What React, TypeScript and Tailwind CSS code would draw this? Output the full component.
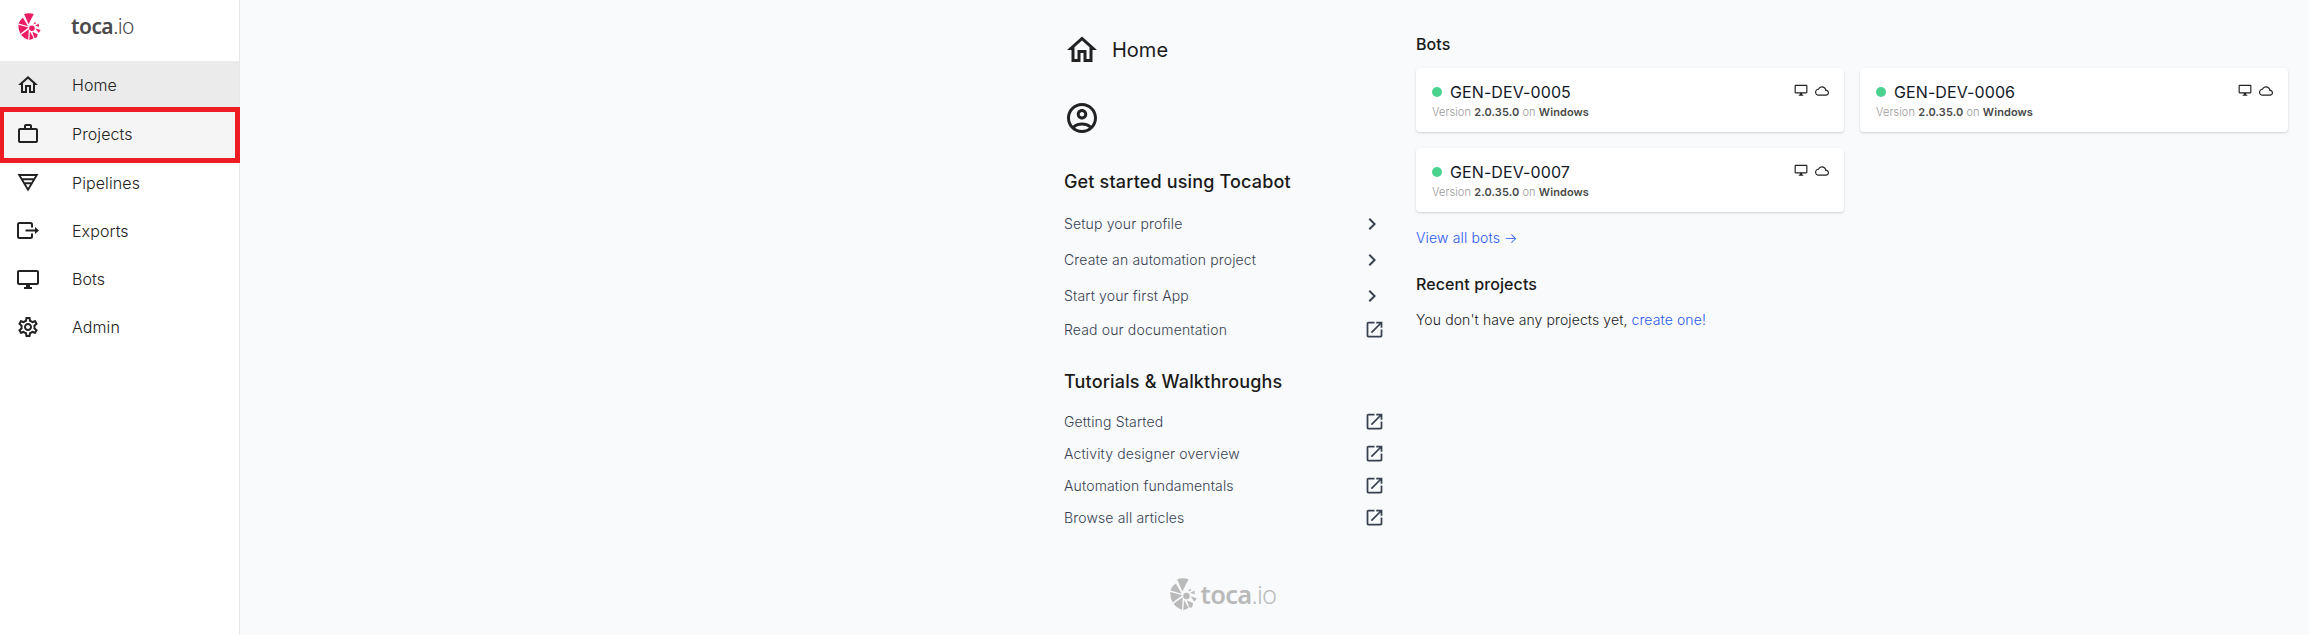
import React from "react";

type IconProps = { d: string; className?: string };
const Icon = ({ d, className }: IconProps) => (
  <svg viewBox="0 0 24 24" fill="currentColor" className={className}>
    <path d={d} />
  </svg>
);

const paths = {
  home: "M12 5.69l5 4.5V18h-2v-6H9v6H7v-7.81l5-4.5M12 3L2 12h3v8h6v-6h2v6h6v-8h3L12 3z",
  work: "M20 6h-4V4c0-1.11-.89-2-2-2h-4c-1.11 0-2 .89-2 2v2H4c-1.1 0-2 .9-2 2v11c0 1.1.9 2 2 2h16c1.1 0 2-.9 2-2V8c0-1.1-.9-2-2-2zM10 4h4v2h-4V4zm10 15H4V8h16v11z",
  monitor: "M21 3H3c-1.1 0-2 .9-2 2v11c0 1.1.9 2 2 2h7v2H8v2h8v-2h-2v-2h7c1.1 0 2-.9 2-2V5c0-1.1-.9-2-2-2zm0 13H3V5h18v11z",
  settings:
    "M19.43 12.98c.04-.32.07-.64.07-.98 0-.34-.03-.66-.07-.98l2.11-1.65c.19-.15.24-.42.12-.64l-2-3.46c-.09-.16-.26-.25-.44-.25-.06 0-.12.01-.17.03l-2.49 1c-.52-.4-1.08-.73-1.69-.98l-.38-2.65C14.46 2.18 14.25 2 14 2h-4c-.25 0-.46.18-.49.42l-.38 2.65c-.61.25-1.17.59-1.69.98l-2.49-1c-.06-.02-.12-.03-.18-.03-.17 0-.34.09-.43.25l-2 3.46c-.13.22-.07.49.12.64l2.11 1.65c-.04.32-.07.65-.07.98 0 .33.03.66.07.98l-2.11 1.65c-.19.15-.24.42-.12.64l2 3.46c.09.16.26.25.44.25.06 0 .12-.01.17-.03l2.49-1c.52.4 1.08.73 1.69.98l.38 2.65c.03.24.24.42.49.42h4c.25 0 .46-.18.49-.42l.38-2.65c.61-.25 1.17-.59 1.69-.98l2.49 1c.06.02.12.03.18.03.17 0 .34-.09.43-.25l2-3.46c.12-.22.07-.49-.12-.64l-2.11-1.65zm-1.98-1.71c.04.31.05.52.05.73 0 .21-.02.43-.05.73l-.14 1.13.89.7 1.08.84-.7 1.21-1.27-.51-1.04-.42-.9.68c-.43.32-.84.56-1.25.73l-1.06.43-.16 1.13-.2 1.35h-1.4l-.19-1.35-.16-1.13-1.06-.43c-.43-.18-.83-.41-1.23-.71l-.91-.7-1.06.43-1.27.51-.7-1.21 1.08-.84.89-.7-.14-1.13c-.03-.31-.05-.54-.05-.74s.02-.43.05-.73l.14-1.13-.89-.7-1.08-.84.7-1.21 1.27.51 1.04.42.9-.68c.43-.32.84-.56 1.25-.73l1.06-.43.16-1.13.2-1.35h1.39l.19 1.35.16 1.13 1.06.43c.43.18.83.41 1.23.71l.91.7 1.06-.43 1.27-.51.7 1.21-1.07.85-.89.7.14 1.13zM12 8c-2.21 0-4 1.79-4 4s1.79 4 4 4 4-1.79 4-4-1.79-4-4-4zm0 6c-1.1 0-2-.9-2-2s.9-2 2-2 2 .9 2 2-.9 2-2 2z",
  account:
    "M12 2C6.48 2 2 6.48 2 12s4.48 10 10 10 10-4.48 10-10S17.52 2 12 2zM7.35 18.5C8.66 17.56 10.26 17 12 17s3.34.56 4.65 1.5C15.34 19.44 13.74 20 12 20s-3.34-.56-4.65-1.5zm10.79-1.38C16.45 15.8 14.32 15 12 15s-4.45.8-6.14 2.12C4.7 15.73 4 13.95 4 12c0-4.42 3.58-8 8-8s8 3.58 8 8c0 1.95-.7 3.73-1.86 5.12zM12 6c-1.93 0-3.5 1.57-3.5 3.5S10.07 13 12 13s3.5-1.57 3.5-3.5S13.93 6 12 6zm0 5c-.83 0-1.5-.67-1.5-1.5S11.17 8 12 8s1.5.67 1.5 1.5S12.83 11 12 11z",
  chevron: "M10 6L8.59 7.41 13.17 12l-4.58 4.59L10 18l6-6-6-6z",
  open: "M19 19H5V5h7V3H5c-1.11 0-2 .9-2 2v14c0 1.1.89 2 2 2h14c1.1 0 2-.9 2-2v-7h-2v7zM14 3v2h3.59l-9.83 9.83 1.41 1.41L19 6.41V10h2V3h-7z",
  cloud:
    "M19.35 10.04C18.67 6.59 15.64 4 12 4 9.11 4 6.61 5.64 5.36 8.04 2.35 8.36 0 10.9 0 14c0 3.31 2.69 6 6 6h13c2.76 0 5-2.24 5-5 0-2.64-2.05-4.78-4.65-4.96zM19 18H6c-2.21 0-4-1.79-4-4 0-2.05 1.53-3.76 3.56-3.97l1.07-.11.5-.95C8.08 7.14 9.94 6 12 6c2.62 0 4.88 1.86 5.39 4.43l.3 1.5 1.53.11c1.56.1 2.78 1.41 2.78 2.96 0 1.65-1.35 3-3 3z",
};

const Shell = ({ className }: { className?: string }) => (
  <svg viewBox="0 0 81 98" fill="currentColor" className={className}>
    <path d="M21 4Q38-2 56 4L37 41Z" />
    <path d="M17 17L35 48L1 38Q4 25 17 17Z" />
    <path d="M0 43L37 53L7 75Q-1 60 0 43Z" />
    <path d="M38 59L36 97Q19 92 10 79Z" />
    <path d="M42 67L56 91Q49 97 40 98Z" />
    <path d="M51 68L70 77Q69 86 66 90L58 90Z" />
    <path d="M62 56L81 62L74 73Z" />
    <path d="M61 46L74 38L75 50Z" />
    <path d="M54 41L61 32L64 38Z" />
    <circle cx="49.500" cy="55" r="10" />
  </svg>
);

const PipelinesIcon = () => (
  <svg viewBox="0 0 24 24" fill="none" stroke="currentColor" strokeWidth="1.900" className="h-6 w-6">
    <path d="M3.200 4h17.600L12 18.700ZM5.500 8.300h13M8 12.300h8" />
  </svg>
);

const ExportsIcon = () => (
  <svg viewBox="0 0 24 24" fill="none" stroke="currentColor" strokeWidth="2" className="h-6 w-6">
    <path d="M16 8.500V5.500Q16 4 14.500 4H3.500Q2 4 2 5.500V17.500Q2 19 3.500 19H14.500Q16 19 16 17.500V14.500" />
    <path d="M9.500 11.500h11" />
    <path d="M19 8l4 3.500-4 3.500z" fill="currentColor" stroke="none" />
  </svg>
);

const nav: { label: string; icon: React.ReactNode; row: string }[] = [
  { label: "Home", icon: <Icon d={paths.home} className="h-6 w-6" />, row: "h-12 bg-[#ebebeb]" },
  { label: "Projects", icon: <Icon d={paths.work} className="h-6 w-6" />, row: "h-[50px] bg-[#f5f5f5]" },
  { label: "Pipelines", icon: <PipelinesIcon />, row: "h-12" },
  { label: "Exports", icon: <ExportsIcon />, row: "h-12" },
  { label: "Bots", icon: <Icon d={paths.monitor} className="h-6 w-6" />, row: "h-12" },
  { label: "Admin", icon: <Icon d={paths.settings} className="h-6 w-6" />, row: "h-12" },
];

const Sidebar = () => (
  <aside className="h-full w-60 shrink-0 border-r border-[#e5e7eb] bg-white text-[#222]">
    <div className="flex h-[61px] items-start">
      <Shell className="mt-[13px] ml-[18px] h-[27px] w-[23px] text-[#ec1c64]" />
      <div className="mt-[13px] ml-[30px] font-['Noto_Sans',sans-serif] text-[21px] leading-[27px] tracking-[-0.55px] text-[#4a4a4a]">
        <span className="font-semibold">toca</span>
        <span className="font-light">.io</span>
      </div>
    </div>
    <nav>
      {nav.map((n) => (
        <div key={n.label} className={`relative flex items-center pl-4 ${n.row}`}>
          {n.icon}
          <span className="ml-8 text-base font-light tracking-[0.1px]">{n.label}</span>
          {n.label === "Projects" && (
            <div className="absolute -top-0.5 -right-px -bottom-1 left-0 z-10 border-[5px] border-l-4 border-[#ee1c23]" />
          )}
        </div>
      ))}
    </nav>
  </aside>
);

const LinkRow = ({ label, external, row }: { label: string; external?: boolean; row: string }) => (
  <li className={`flex items-center justify-between text-sm font-light tracking-[0.15px] text-[#374151] ${row}`}>
    <span>{label}</span>
    {external ? (
      <Icon d={paths.open} className="-mr-px mb-px h-[21px] w-[21px]" />
    ) : (
      <Icon d={paths.chevron} className="h-6 w-6" />
    )}
  </li>
);

const BotCard = ({ name }: { name: string }) => (
  <div className="flex h-16 justify-between rounded bg-white pr-[15px] pl-4 shadow-[0_1px_3px_rgba(0,0,0,0.1),0_1px_2px_rgba(0,0,0,0.08)]">
    <div>
      <div className="mt-3 flex h-6 items-center">
        <span className="h-2.5 w-2.5 rounded-full bg-[#4bd28f]" />
        <span className="ml-2 text-base tracking-[0.1px] text-[#111827]">{name}</span>
      </div>
      <div className="h-4 text-[11px] leading-4 font-light tracking-[0.09px] text-[#999]">
        Version <b className="font-semibold text-[#4a4a4a]">2.0.35.0</b> on{" "}
        <b className="font-semibold text-[#4a4a4a]">Windows</b>
      </div>
    </div>
    <div className="mt-4 flex h-[14px] gap-[7px] text-[#222]">
      <Icon d={paths.monitor} className="-mt-px h-[14px] w-[14px]" />
      <Icon d={paths.cloud} className="h-[14px] w-[14px]" />
    </div>
  </div>
);

export default function App() {
  return (
    <div className="flex h-[635px] w-full overflow-hidden bg-[#f9fafc] font-['Inter',sans-serif] text-[#1a1a1a]">
      <Sidebar />
      <main className="flex flex-1 justify-end pr-[21px]">
        <section className="mr-8 w-80">
          <div className="mt-8 flex h-9 items-center">
            <Icon d={paths.home} className="h-9 w-9 text-[#222]" />
            <h1 className="ml-3 text-xl font-normal">Home</h1>
          </div>
          <Icon d={paths.account} className="mt-8 h-9 w-9 text-[#222]" />
          <h2 className="mt-8 flex h-7 items-center text-lg font-medium tracking-[0.16px]">Get started using Tocabot</h2>
          <ul className="mt-[10px]">
            <LinkRow label="Setup your profile" row="h-9" />
            <LinkRow label="Create an automation project" row="h-9" />
            <LinkRow label="Start your first App" row="h-9" />
            <LinkRow label="Read our documentation" external row="h-8" />
          </ul>
          <h2 className="mt-[22px] flex h-7 items-center text-lg font-medium tracking-[0.16px]">
            Tutorials &amp; Walkthroughs
          </h2>
          <ul className="mt-[10px]">
            <LinkRow label="Getting Started" external row="h-8" />
            <LinkRow label="Activity designer overview" external row="h-8" />
            <LinkRow label="Automation fundamentals" external row="h-8" />
            <LinkRow label="Browse all articles" external row="h-8" />
          </ul>
          <div className="mt-11 flex items-start justify-center text-[#bababa]">
            <Shell className="h-8 w-[27px]" />
            <div className="mr-0.5 ml-1 font-['Noto_Sans',sans-serif] text-[25.5px] leading-8 tracking-[-0.75px]">
              <span className="font-semibold">toca</span>
              <span className="font-light">.io</span>
            </div>
          </div>
        </section>
        <section className="w-[872px]">
          <h3 className="mt-8 flex h-6 items-center text-base font-medium tracking-[0.1px]">Bots</h3>
          <div className="mt-3 grid grid-cols-2 gap-4">
            <BotCard name="GEN-DEV-0005" />
            <BotCard name="GEN-DEV-0006" />
            <BotCard name="GEN-DEV-0007" />
          </div>
          <div className="mt-4 flex h-5 items-center text-sm font-light tracking-[0.15px] text-[#2b59f0]">
            View all bots →
          </div>
          <h3 className="mt-6 flex h-6 items-center text-base font-medium tracking-[0.1px]">Recent projects</h3>
          <p className="mt-[14px] text-sm leading-5 font-light tracking-[0.1px]">
            You don't have any projects yet, <a className="text-[#2b59f0]">create one!</a>
          </p>
        </section>
      </main>
    </div>
  );
}
